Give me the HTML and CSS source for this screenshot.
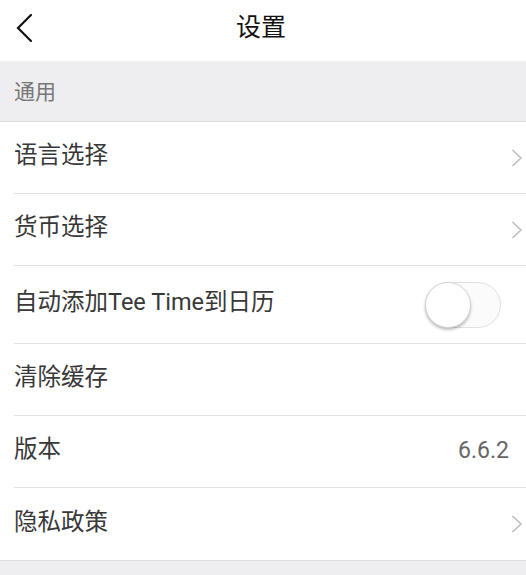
FILE: index.html
```html
<!DOCTYPE html>
<html lang="zh-CN">
<head>
<meta charset="utf-8">
<title>设置</title>
<link rel="stylesheet" href="styles.css">
</head>
<body>
<div class="page">
  <header class="topbar">
    <span class="back">
      <svg width="18" height="30" viewBox="0 0 18 30"><path d="M16 2 L3 15 L16 28" fill="none" stroke="#111" stroke-width="2.2" stroke-linecap="round" stroke-linejoin="miter"/></svg>
    </span>
    <h1 class="title">设置</h1>
  </header>
  <div class="section-head">通用</div>
  <ul class="list">
    <li class="row"><span class="label">语言选择</span><span class="chev"><svg width="12" height="18" viewBox="0 0 12 18"><path d="M1.5 1 L10 9 L1.5 17" fill="none" stroke="#bbb" stroke-width="1.5"/></svg></span></li>
    <li class="row"><span class="label">货币选择</span><span class="chev"><svg width="12" height="18" viewBox="0 0 12 18"><path d="M1.5 1 L10 9 L1.5 17" fill="none" stroke="#bbb" stroke-width="1.5"/></svg></span></li>
    <li class="row tall"><span class="label">自动添加Tee Time到日历</span><span class="switch"><span class="knob"></span></span></li>
    <li class="row"><span class="label">清除缓存</span></li>
    <li class="row"><span class="label">版本</span><span class="value">6.6.2</span></li>
    <li class="row last"><span class="label">隐私政策</span><span class="chev"><svg width="12" height="18" viewBox="0 0 12 18"><path d="M1.5 1 L10 9 L1.5 17" fill="none" stroke="#bbb" stroke-width="1.5"/></svg></span></li>
  </ul>
  <div class="footer-fill"></div>
</div>
</body>
</html>
```
FILE: styles.css
```css
* { box-sizing: border-box; }
html, body { margin: 0; padding: 0; }
body {
  font-family: "Roboto", "Noto Sans CJK SC", sans-serif;
  color: #333;
  background: #fff;
}
.page { width: 526px; min-height: 575px; display: flex; flex-direction: column; }
.topbar {
  height: 61px;
  display: flex;
  align-items: center;
  justify-content: center;
  position: relative;
  padding-bottom: 6px;
}
.back {
  position: absolute;
  left: 15px;
  top: 13px;
  display: flex;
}
.title {
  margin: 0;
  font-size: 25px;
  font-weight: 400;
  color: #111;
  line-height: 1;
  margin-left: -4px;
}
.section-head {
  height: 61px;
  background: #eeeef0;
  border-bottom: 1px solid #dcdcdc;
  padding-left: 14px;
  padding-bottom: 2px;
  display: flex;
  align-items: center;
  font-size: 21px;
  color: #777;
}
.list {
  list-style: none;
  margin: 0;
  padding: 0 0 0 14px;
}
.row {
  height: 72px;
  display: flex;
  align-items: center;
  justify-content: space-between;
  border-bottom: 1px solid #e2e2e2;
  font-size: 23.5px;
  color: #383838;
}
.label { line-height: 1; padding-bottom: 3px; }
.row.tall { height: 78px; }
.row.last { border-bottom: none; }
.chev { display: flex; margin-right: 3px; }
.value { margin-right: 17px; font-size: 23px; color: #666; line-height: 1; padding-bottom: 3px; }
.switch {
  width: 76px;
  height: 46px;
  border-radius: 23px;
  background: #fbfbfb;
  border: 1px solid #e0e0e0;
  margin-right: 25px;
  position: relative;
}
.knob {
  position: absolute;
  left: -1px;
  top: -1px;
  width: 46px;
  height: 46px;
  border-radius: 50%;
  background: #fff;
  border: 1px solid #d6d6d6;
  box-shadow: 0 2px 3px rgba(0,0,0,0.25);
}
.footer-fill {
  flex: 1;
  background: #eeeef0;
  border-top: 1px solid #dcdcdc;
}
```
